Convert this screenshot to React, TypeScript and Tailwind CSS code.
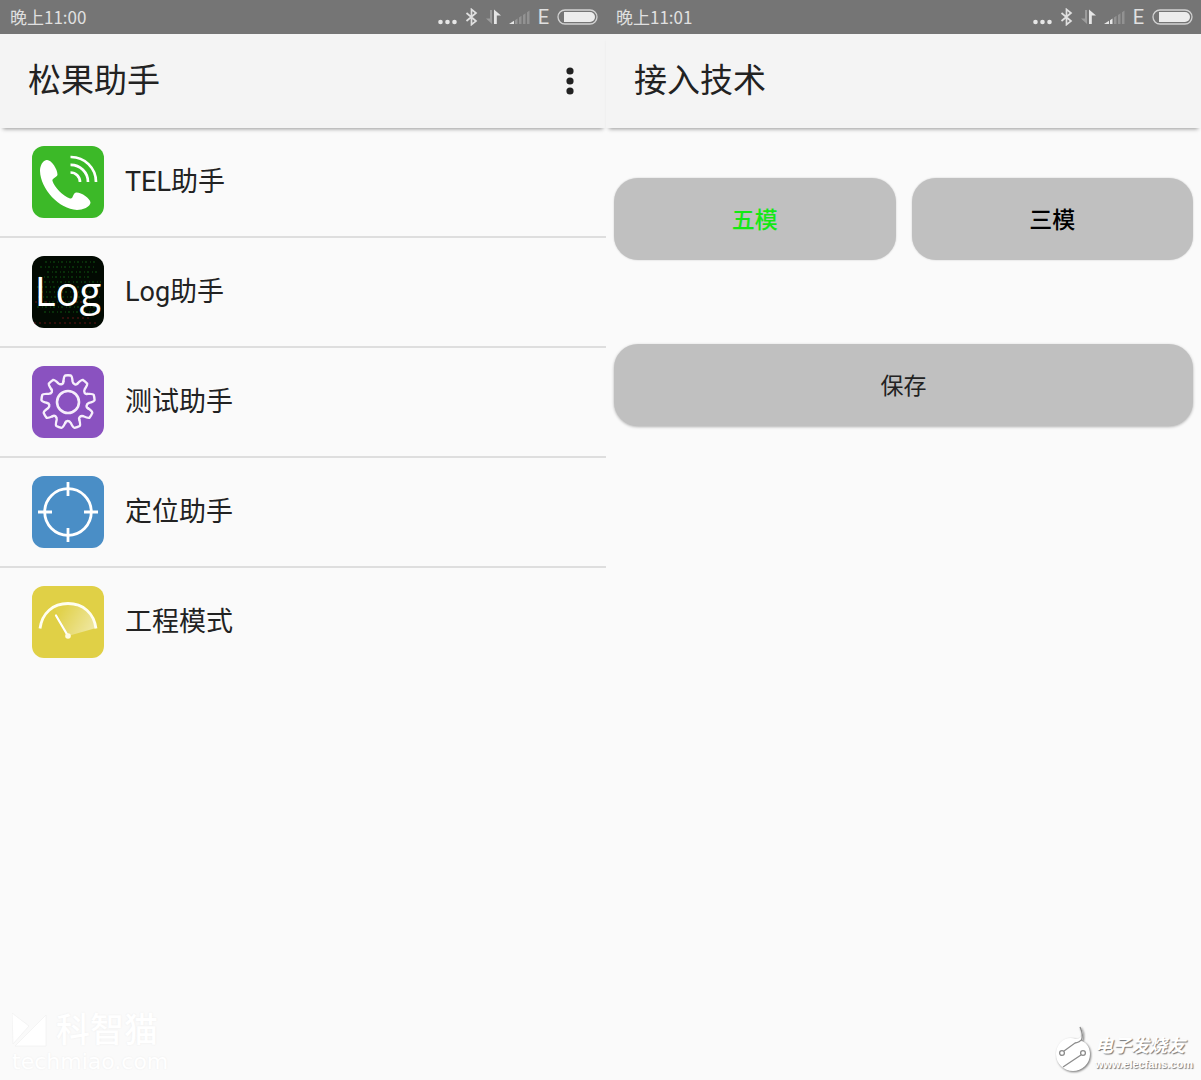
import type { ReactNode } from "react";

type Helper = {
  label: string;
  icon: ReactNode;
};

function BluetoothIcon() {
  return (
    <svg
      viewBox="0 0 13 18"
      className="h-[18px] w-[13px]"
      fill="none"
      stroke="currentColor"
      strokeWidth="1.7"
      aria-hidden="true"
    >
      <path d="M1.5 5 11 13 6.5 16.6V1.4L11 5 1.5 13" />
    </svg>
  );
}

function DataArrowsIcon() {
  return (
    <svg viewBox="0 0 15 16" className="h-4 w-[15px]" aria-hidden="true">
      <path d="M6 1H4v8.5H0L6 15Z" fill="#9c9c9c" />
      <path d="M8 15h2.8V6.5H15L8 .5Z" fill="#e6e6e6" />
    </svg>
  );
}

function SignalIcon({ bars }: { bars: number }) {
  return (
    <svg viewBox="0 0 21 16" className="h-4 w-[21px]" aria-hidden="true">
      <path d="M0 15 5 11.8V15Z" fill="#e6e6e6" />
      <path d="M6 11.2 8.5 9.5V15H6Z" fill={bars > 1 ? "#e6e6e6" : "#969696"} />
      <path
        d="M10 8.5 12.5 6.8V15H10ZM14 6 16.5 4.2V15H14ZM18 3.2 20.5 1.5V15H18Z"
        fill="#929292"
      />
    </svg>
  );
}

function BatteryIcon() {
  return (
    <svg viewBox="0 0 41 16" className="h-4 w-[41px]" aria-hidden="true">
      <rect
        x="1"
        y="1"
        width="39"
        height="14"
        rx="7"
        fill="none"
        stroke="#d2d2d2"
        strokeWidth="1.3"
      />
      <path d="M7 3h26a5 5 0 0 1 0 10H7Z" fill="#ececec" />
    </svg>
  );
}

function StatusBar({ time, bars }: { time: string; bars: number }) {
  return (
    <div className="flex h-[34px] items-center justify-between bg-[#757575] pr-2 pl-[10px] text-[#e0e0e0]">
      <span className="font-['Noto_Sans_CJK_SC',sans-serif] text-[17px] leading-6">
        {time}
      </span>
      <div className="flex items-center gap-2">
        <svg viewBox="0 0 19 16" className="h-4 w-[19px]" fill="#e6e6e6" aria-hidden="true">
          <circle cx="2.5" cy="13" r="2.3" />
          <circle cx="9.5" cy="13" r="2.3" />
          <circle cx="16.5" cy="13" r="2.3" />
        </svg>
        <BluetoothIcon />
        <DataArrowsIcon />
        <SignalIcon bars={bars} />
        <span className="text-xl leading-6">E</span>
        <BatteryIcon />
      </div>
    </div>
  );
}

function AppBar({ title, children }: { title: string; children?: ReactNode }) {
  return (
    <header className="flex h-[94px] items-center justify-between bg-[#f4f4f4] px-7 shadow-[0_4px_4px_-3px_rgba(0,0,0,0.4)]">
      <h1 className="text-[33px] leading-10">{title}</h1>
      {children}
    </header>
  );
}

function PhoneIcon() {
  return (
    <svg viewBox="0 0 72 72" className="size-[72px] rounded-xl bg-[#3cb928]" aria-hidden="true">
      <path
        d="M14.5 14C19 13 25.5 23 25.5 28.5 25.5 31.5 19.5 32 20.5 35 23 42 30.5 49.5 38 52.5 41.5 53.5 40.5 47 44 46.5 49 46 58 52 58.5 56.5 58.5 61 50.5 64 45 64 27 63 8.5 43 8 25 8 20 10.5 14.5 14.5 14Z"
        fill="#fff"
      />
      <g fill="none" stroke="#fff" strokeWidth="2.7">
        <path d="M38.5 26.5A9.5 9.5 0 0 1 48 36" />
        <path d="M38.5 18.8A17.2 17.2 0 0 1 56 36" />
        <path d="M38.5 11A25 25 0 0 1 64 36" />
      </g>
    </svg>
  );
}

function LogIcon() {
  return (
    <span className="relative flex size-[72px] items-center justify-center overflow-hidden rounded-xl bg-[#020a02] text-white">
      <svg viewBox="0 0 72 72" className="absolute inset-0 size-full" fill="none" aria-hidden="true">
        <g strokeWidth="1.5">
          <path
            d="M13 6H65M8 11H62M15 16H66M7 21H60M12 26H69M5 31H67M9 36H62M6 41H68M12 46H58M5 51H64M12 56H65"
            stroke="#0b3d0d"
            strokeDasharray="2 3 1 2"
          />
          <path d="M3 46H18M38 46H55M2 67H66M30 62H60" stroke="#431111" strokeDasharray="2 3" />
        </g>
      </svg>
      <span className="relative pb-0.5 font-['Open_Sans',sans-serif] text-[40px] leading-[68px]">
        Log
      </span>
    </span>
  );
}

function GearIcon() {
  return (
    <svg
      viewBox="0 0 72 72"
      className="size-[72px] rounded-xl bg-[#8a52c0]"
      fill="none"
      stroke="#f6eefb"
      strokeWidth="2.4"
      strokeLinejoin="round"
      strokeLinecap="round"
      aria-hidden="true"
    >
      <circle cx="36" cy="36" r="11" strokeWidth="2.6" />
      {/* one tooth and its valley, repeated nine times */}
      {[0, 40, 80, 120, 160, 200, 240, 280, 320].map((angle) => (
        <path
          key={angle}
          d="M31.4 15.5Q32 9.9 33.3 9.5Q36 9.1 38.7 9.5Q40 9.9 40.6 15.5C41.3 18.6 44.3 19.4 45.7 17.3"
          transform={`rotate(${angle} 36 36)`}
        />
      ))}
    </svg>
  );
}

function TargetIcon() {
  return (
    <svg
      viewBox="0 0 72 72"
      className="size-[72px] rounded-xl bg-[#4a8ec6]"
      fill="none"
      stroke="#fff"
      strokeWidth="2.8"
      aria-hidden="true"
    >
      <circle cx="36" cy="36" r="23.3" />
      <path d="M36 6v14M36 52v14M6 36h14M52 36h14" />
    </svg>
  );
}

function GaugeIcon() {
  return (
    <svg viewBox="0 0 72 72" className="size-[72px] rounded-xl bg-[#e0d046]" aria-hidden="true">
      <defs>
        <linearGradient id="sweep" x1="0.1" y1="0.3" x2="1" y2="0.7">
          <stop offset="0" stopColor="#fff" stopOpacity="0.04" />
          <stop offset="1" stopColor="#fff" stopOpacity="0.5" />
        </linearGradient>
      </defs>
      <path d="M36 50 23 22A28 26 0 0 1 64 42Z" fill="url(#sweep)" />
      <path
        d="M8 42.5C10 27 21 17.5 36 17.5S62 27 64 42.5"
        fill="none"
        stroke="#fffef0"
        strokeWidth="2.8"
      />
      <path d="M24 29.5 36 50" stroke="#fff" strokeWidth="2.2" strokeLinecap="round" />
      <circle cx="36" cy="50" r="2.8" fill="#fffbe0" />
    </svg>
  );
}

const helpers: Helper[] = [
  { label: "TEL助手", icon: <PhoneIcon /> },
  { label: "Log助手", icon: <LogIcon /> },
  { label: "测试助手", icon: <GearIcon /> },
  { label: "定位助手", icon: <TargetIcon /> },
  { label: "工程模式", icon: <GaugeIcon /> },
];

function HelperList() {
  return (
    <ul className="divide-y-2 divide-[#dedede]">
      {helpers.map((helper) => (
        <li key={helper.label}>
          <a href="#" className="flex h-[108px] items-center gap-[21px] pl-8">
            {helper.icon}
            <span className="text-[27px] leading-9">{helper.label}</span>
          </a>
        </li>
      ))}
    </ul>
  );
}

function TechmiaoMark() {
  return (
    <div className="mt-auto flex w-fit flex-col pb-2 pl-3 text-white [text-shadow:0_0_2px_#ececec]">
      <div className="flex items-center gap-2">
        <svg viewBox="0 0 36 34" className="h-[34px] w-9" fill="#fff" aria-hidden="true">
          <path d="M0 0 17 13 1 31ZM34 2V33H3Z" stroke="#f1f1f1" strokeWidth="0.8" />
        </svg>
        <span className="text-[34px] leading-9 font-medium">科智猫</span>
      </div>
      <span className="pt-1 font-['DejaVu_Sans',sans-serif] text-[22px] leading-5">
        techmiao.com
      </span>
    </div>
  );
}

function ElecfansMark() {
  return (
    <div className="mt-auto flex w-fit items-end gap-1 self-end pr-2 pb-2 text-white">
      <svg
        viewBox="0 0 36 46"
        className="h-[46px] w-9 drop-shadow-[1px_1px_1px_rgba(0,0,0,0.55)]"
        fill="none"
        aria-hidden="true"
      >
        <path
          d="M25 1C28 8 27 13 21 13 10 9 1 18 1 28 1 38 9 45 18 45S35 38 35 28C35 22 32 17 27 15 29 10 28 5 25 1Z"
          fill="#fff"
        />
        <g stroke="#8c8c8c" strokeWidth="1.3">
          <path d="M25 1C28 7 28 11 26 15" />
          <circle cx="7" cy="27" r="2.4" />
          <circle cx="28" cy="27" r="2.4" />
          <path d="M9 25 20 17Q25 16 26 14M26 29 8 41" />
        </g>
      </svg>
      <div className="flex flex-col [text-shadow:1px_1px_1px_#777]">
        <span className="text-lg leading-5 font-bold italic">电子发烧友</span>
        <span className="font-['Liberation_Sans',sans-serif] text-[11px] leading-4 font-bold">
          www.elecfans.com
        </span>
      </div>
    </div>
  );
}

export default function App() {
  return (
    <div className="grid min-h-screen grid-cols-[606fr_595fr] bg-[#fafafa] font-[Roboto,'Noto_Sans_CJK_SC',sans-serif] text-[#222]">
      <section className="flex min-w-0 flex-col">
        <StatusBar time="晚上11:00" bars={1} />
        <AppBar title="松果助手">
          <button type="button" aria-label="更多" className="p-1">
            <svg viewBox="0 0 8 28" className="h-7 w-2" fill="#222" aria-hidden="true">
              <circle cx="4" cy="4" r="3.6" />
              <circle cx="4" cy="14" r="3.6" />
              <circle cx="4" cy="24" r="3.6" />
            </svg>
          </button>
        </AppBar>
        <HelperList />
        <TechmiaoMark />
      </section>

      <section className="flex min-w-0 flex-col">
        <StatusBar time="晚上11:01" bars={2} />
        <AppBar title="接入技术" />
        <main className="flex flex-col gap-[84px] px-2 pt-[50px]">
          <div className="grid grid-cols-2 gap-4">
            <button
              type="button"
              className="h-[82px] rounded-3xl bg-[#c0c0c0] pt-1 text-[23px] font-medium text-[#14e814] shadow-[0_0_2px_rgba(0,0,0,0.2)]"
            >
              五模
            </button>
            <button
              type="button"
              className="h-[82px] rounded-3xl bg-[#c0c0c0] pt-1 text-[23px] font-medium text-black shadow-[0_0_2px_rgba(0,0,0,0.2)]"
            >
              三模
            </button>
          </div>
          <button
            type="button"
            className="h-[82px] rounded-3xl bg-[#c0c0c0] pt-1 text-[23px] shadow-[0_1px_3px_rgba(0,0,0,0.3)]"
          >
            保存
          </button>
        </main>
        <ElecfansMark />
      </section>
    </div>
  );
}
